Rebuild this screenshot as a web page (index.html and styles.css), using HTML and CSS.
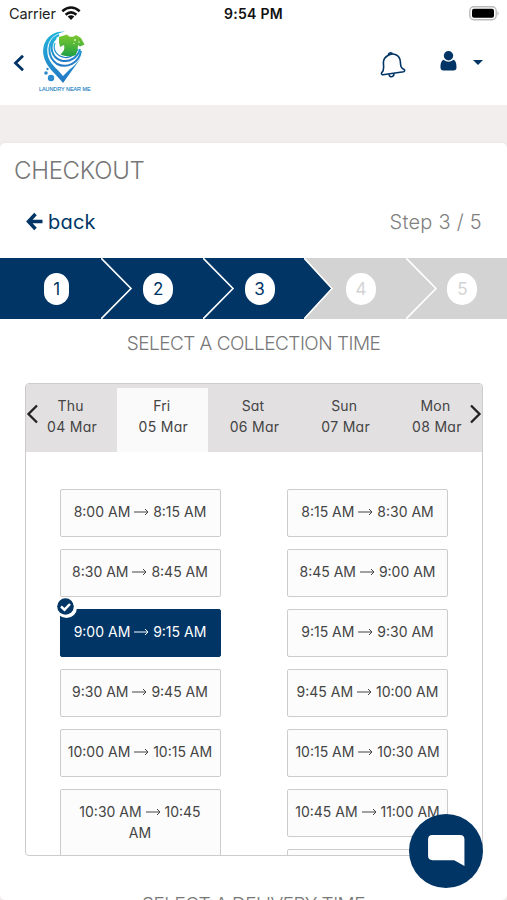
FILE: index.html
```html
<!DOCTYPE html>
<html lang="en">
<head>
<meta charset="utf-8">
<title>Checkout</title>
<link rel="stylesheet" href="styles.css">
</head>
<body>
<div class="status">
  <span class="carrier">Carrier</span>
  <svg class="wifi" width="20" height="15" viewBox="0 0 20 15"><g fill="none" stroke="#111" stroke-width="2.5"><path d="M1.3 5.3Q10-2.3 18.7 5.3"/><path d="M4.6 8.7Q10 4 15.4 8.7"/></g><path d="M6.7 10.6Q10 7.9 13.3 10.6L10 14z" fill="#111"/></svg>
  <span class="clock">9:54 PM</span>
  <svg class="battery" width="31" height="15" viewBox="0 0 31 15"><rect x=".8" y=".8" width="26.4" height="13" rx="4" fill="#fff" stroke="#bbb" stroke-width="1.4"/><rect x="3" y="2.8" width="22" height="9" rx="2" fill="#000"/><path d="M28.5 5Q31 7.3 28.5 9.7z" fill="#bbb"/></svg>
</div>
<header class="nav">
  <svg class="nav-back" width="12" height="18" viewBox="0 0 12 18"><path d="M10 1.8L2.5 9L10 16.2" fill="none" stroke="#003263" stroke-width="2.8"/></svg>
  <svg class="logo" width="54" height="66" viewBox="0 0 54 66">
    <defs><linearGradient id="pin" x1="0" y1="0" x2="0" y2="1"><stop offset="0" stop-color="#20b5dc"/><stop offset="1" stop-color="#2478c4"/></linearGradient><linearGradient id="shirt" x1="0" y1="0" x2="0" y2="1"><stop offset="0" stop-color="#7fc92e"/><stop offset="1" stop-color="#20a044"/></linearGradient></defs>
    <path d="M27 .5C12-.5 3.500 11 5.500 24C7.500 36 18 43 25 52L43 27C38 33 35 36 32 38L25 45C19 37 11 33 9.500 23C8 11 14 3 27 .5Z" fill="url(#pin)"/>
    <g fill="none" stroke="url(#pin)"><path d="M21 4C8 10 9 26 19 33C29 38 41 32 43 20" stroke-width="2"/><path d="M18 7C10 15 14 27 23 29.500C32 32 40 26 42 18" stroke-width="2"/><path d="M17 12C14 20 20 25.500 27 26.500C33 27 38 23 40 18" stroke-width="1.200"/></g>
    <path d="M21 6L29 3.500C31 6.500 36 6.500 38 4L43 7L46.500 13.500L42 15.500L40 14C40 19 38 22 38 24C33 26 27 25.500 22.500 23.500C26 20 27 18 26 14L22 16L21 11Z" fill="url(#shirt)"/>
    <g fill="#d8f3bd"><circle cx="37" cy="9" r="1"/><circle cx="41" cy="11" r=".8"/><circle cx="36" cy="12.500" r=".7"/></g>
    <g fill="#2c8bcf"><circle cx="13" cy="47" r="3.200"/><circle cx="8" cy="42" r="1.800"/><circle cx="9.500" cy="38" r="1.200"/></g>
    <text x="1" y="59.500" textLength="51.500" lengthAdjust="spacingAndGlyphs" class="logo-text">LAUNDRY NEAR ME</text>
  </svg>
  <svg class="bell" width="26" height="27" viewBox="0 0 26 27"><g fill="none" stroke="#003566" stroke-width="1.6" stroke-linejoin="round"><path d="M7.5 3.8C13-.2 20 3 20.4 10C20.6 14 20.8 16 24 17.5C25 18.2 24.8 19.4 23.7 19.7L3 22.8C1.500 22.900 1 21.300 2 20.300C5 17.500 3 13.500 3.500 9.500C3.800 7 5.500 5 7.500 3.800Z"/><path d="M8.500 3.400C8 .4 12 .2 12.500 2.400M9 22.400C9.500 26 14 25.400 14 21.600"/></g></svg>
  <svg class="user" width="17" height="20" viewBox="0 0 17 20" fill="#003566"><circle cx="8.500" cy="4.800" r="4.700"/><path d="M3.500 8.800Q8.500 12.500 13.500 8.800C16 9.800 16.500 13 16.500 16.500Q16.500 19.500 13.500 19.500H3.500Q.5 19.500 .5 16.500C.5 13 1 9.800 3.500 8.800Z"/></svg>
  <svg class="caret" width="10" height="5" viewBox="0 0 10 5"><path d="M0 0H10L5 5Z" fill="#003566"/></svg>
</header>
<main class="card">
  <h1>CHECKOUT</h1>
  <div class="step-row">
    <a class="back"><svg width="17" height="19" viewBox="0 0 17 19"><path d="M9.500 2L2.500 9.500L9.500 17M3 9.500H16.500" fill="none" stroke="#003566" stroke-width="3.500"/></svg><span>back</span></a>
    <span class="count">Step 3 / 5</span>
  </div>
  <div class="stepper">
    <div class="step done"><span class="num one">1</span><svg class="chev" viewBox="0 0 32 61"><path d="M0 0L30 30.500L0 61"/></svg></div>
    <div class="step done"><span class="num">2</span><svg class="chev" viewBox="0 0 32 61"><path d="M0 0L30 30.500L0 61"/></svg></div>
    <div class="step done"><span class="num">3</span><svg class="chev last" viewBox="0 0 32 61"><path d="M0 0L28 30.500L0 61"/></svg></div>
    <div class="step"><span class="num">4</span><svg class="chev" viewBox="0 0 32 61"><path d="M0 0L30 30.500L0 61"/></svg></div>
    <div class="step"><span class="num">5</span></div>
  </div>
  <h2>SELECT A COLLECTION TIME</h2>
  <section class="picker">
    <div class="days">
      <div class="day"><span class="dow">Thu</span><span class="date">04 Mar</span></div>
      <div class="day active"><span class="dow">Fri</span><span class="date">05 Mar</span></div>
      <div class="day"><span class="dow">Sat</span><span class="date">06 Mar</span></div>
      <div class="day"><span class="dow">Sun</span><span class="date">07 Mar</span></div>
      <div class="day"><span class="dow">Mon</span><span class="date">08 Mar</span></div>
      <svg class="prev" width="13" height="20" viewBox="0 0 13 20"><path d="M11 1.500L2.500 10L11 18.500"/></svg>
      <svg class="next" width="13" height="20" viewBox="0 0 13 20"><path d="M2 1.500L10.500 10L2 18.500"/></svg>
    </div>
    <div class="slots">
      <div class="slot">8:00 AM <svg class="arr" viewBox="0 0 15 8"><path d="M0 4H14M11 1L14 4L11 7"/></svg> 8:15 AM</div>
      <div class="slot">8:15 AM <svg class="arr" viewBox="0 0 15 8"><path d="M0 4H14M11 1L14 4L11 7"/></svg> 8:30 AM</div>
      <div class="slot">8:30 AM <svg class="arr" viewBox="0 0 15 8"><path d="M0 4H14M11 1L14 4L11 7"/></svg> 8:45 AM</div>
      <div class="slot">8:45 AM <svg class="arr" viewBox="0 0 15 8"><path d="M0 4H14M11 1L14 4L11 7"/></svg> 9:00 AM</div>
      <div class="slot chosen"><svg class="tick" width="21" height="21" viewBox="0 0 21 21"><circle cx="10.500" cy="10.500" r="10.500" fill="#fff"/><circle cx="9.500" cy="9.500" r="8.300" fill="#003566"/><path d="M5 9.500L8.500 12.700L14 7" fill="none" stroke="#fff" stroke-width="2.500"/></svg>9:00 AM <svg class="arr" viewBox="0 0 15 8"><path d="M0 4H14M11 1L14 4L11 7"/></svg> 9:15 AM</div>
      <div class="slot">9:15 AM <svg class="arr" viewBox="0 0 15 8"><path d="M0 4H14M11 1L14 4L11 7"/></svg> 9:30 AM</div>
      <div class="slot">9:30 AM <svg class="arr" viewBox="0 0 15 8"><path d="M0 4H14M11 1L14 4L11 7"/></svg> 9:45 AM</div>
      <div class="slot">9:45 AM <svg class="arr" viewBox="0 0 15 8"><path d="M0 4H14M11 1L14 4L11 7"/></svg> 10:00 AM</div>
      <div class="slot">10:00 AM <svg class="arr" viewBox="0 0 15 8"><path d="M0 4H14M11 1L14 4L11 7"/></svg> 10:15 AM</div>
      <div class="slot">10:15 AM <svg class="arr" viewBox="0 0 15 8"><path d="M0 4H14M11 1L14 4L11 7"/></svg> 10:30 AM</div>
      <div class="slot tall">10:30 AM <svg class="arr" viewBox="0 0 15 8"><path d="M0 4H14M11 1L14 4L11 7"/></svg> 10:45<br>AM</div>
      <div class="stack">
        <div class="slot">10:45 AM <svg class="arr" viewBox="0 0 15 8"><path d="M0 4H14M11 1L14 4L11 7"/></svg> 11:00 AM</div>
        <div class="slot"></div>
      </div>
    </div>
  </section>
  <h2 class="delivery">SELECT A DELIVERY TIME</h2>
</main>
<div class="chat"><svg width="37" height="32" viewBox="0 0 38 33"><path d="M4.500 0H33Q37.500 0 37.500 4.500V32L27 26H4.500Q0 26 0 21.500V4.500Q0 0 4.500 0Z" fill="#fff"/></svg></div>
</body>
</html>
```
FILE: styles.css
```css
* { box-sizing: border-box; }
html, body { height: 900px; overflow: hidden; }
body {
  margin: 0;
  background: #f1eeed;
  font-family: Inter, "Open Sans", sans-serif;
  font-feature-settings: "cv11";
  color: #444;
}
svg { display: block; flex: none; }
.status {
  height: 28px;
  display: flex;
  align-items: center;
  background: #fff;
  padding: 0 7px 0 9px;
  position: relative;
  font: 14.5px/28px Inter, sans-serif;
  font-feature-settings: normal;
  color: #222;
}
.carrier { letter-spacing: -.1px; }
.wifi { margin-left: 5px; margin-top: -2px; }
.clock { position: absolute; left: 0; right: 0; text-align: center; font-weight: 600; font-size: 14px; letter-spacing: .3px; color: #111; }
.battery { margin-left: auto; margin-top: -2px; }
.nav {
  height: 77px;
  background: #fff;
  display: flex;
  align-items: flex-start;
  padding-left: 13px;
}
.nav-back { margin-top: 26px; }
.logo { margin: 3px 0 0 13px; overflow: visible; }
.logo-text { font: 6px "Liberation Sans", sans-serif; fill: #237fc1; stroke: #237fc1; stroke-width: .15; }
.bell { margin: 24px 0 0 288px; }
.user { margin: 23px 0 0 34px; }
.caret { margin: 32px 0 0 16px; }
.card { margin-top: 38px; height: 757px; background: #fff; border-radius: 5px; overflow: hidden; box-shadow: 0 0 3px #e2dedd; }
h1 { margin: 0; padding: 12px 0 0 14px; font-size: 24px; line-height: 32px; font-weight: 300; color: #777; letter-spacing: -.3px; }
.step-row { display: flex; justify-content: space-between; align-items: center; height: 30px; margin: 20px 25px 0 26px; font-size: 20px; line-height: 30px; }
.back { display: flex; align-items: center; gap: 5px; color: #003566; letter-spacing: .2px; }
.back svg { margin-top: -2px; }
.count { color: #808080; font-weight: 300; letter-spacing: .25px; }
.stepper { display: flex; height: 61px; margin-top: 21px; background: #d3d3d3; }
.step { flex: 1; position: relative; display: flex; align-items: center; justify-content: center; padding-left: 12px; }
.done { background: #003566; }
.num { width: 30px; height: 32px; border-radius: 16px; background: #fff; color: #d3d3d3; font-size: 17px; line-height: 32px; text-align: center; }
.done .num { color: #003566; }
.num.one { width: 25px; }
.chev { position: absolute; z-index: 1; left: 100%; top: 0; width: 32px; height: 61px; fill: none; stroke: #fff; stroke-width: 1.6; }
.chev.last { fill: #003566; }
h2 { margin: 0; padding-top: 10px; font-size: 19px; line-height: 30px; font-weight: 300; color: #777; text-align: center; letter-spacing: -.53px; }
.picker { height: 473px; margin: 24px 24px 0 25px; border: 1px solid #ccc; border-radius: 4px; overflow: hidden; }
.days { position: relative; display: flex; height: 68px; padding-top: 4px; background: #e3e0e1; font-size: 14px; line-height: 21px; }
.day { flex: 1; display: flex; flex-direction: column; align-items: center; padding-top: 7px; }
.day.active { background: #fafafa; }
.dow { margin-right: 2px; letter-spacing: .2px; }
.date { margin-left: 1px; letter-spacing: .3px; }
.prev, .next { position: absolute; top: 20px; fill: none; stroke: #222; stroke-width: 2.300; }
.prev { left: 0; }
.next { right: 0; }
.slots { display: grid; grid-template-columns: 161px 161px; column-gap: 66.500px; row-gap: 12px; padding: 37px 0 0 33.500px; align-items: start; }
.slot { position: relative; height: 48px; border: 1px solid #ccc; border-radius: 2px; background: #fcfcfc; font-size: 14px; line-height: 21px; padding-top: 11px; text-align: center; white-space: nowrap; }
.arr { display: inline-block; width: 15px; height: 8px; fill: none; stroke: currentColor; stroke-width: 1; vertical-align: 1px; }
.chosen { background: #003566; border-color: #003566; color: #fff; }
.tick { position: absolute; left: -5px; top: -13px; }
.tall { height: 70px; }
.stack { display: grid; row-gap: 12px; }
.delivery { padding-top: 33.500px; }
.chat { position: absolute; left: 409px; top: 814px; z-index: 3; width: 74px; height: 74px; border-radius: 50%; background: #003566; display: flex; align-items: center; justify-content: center; }
```
